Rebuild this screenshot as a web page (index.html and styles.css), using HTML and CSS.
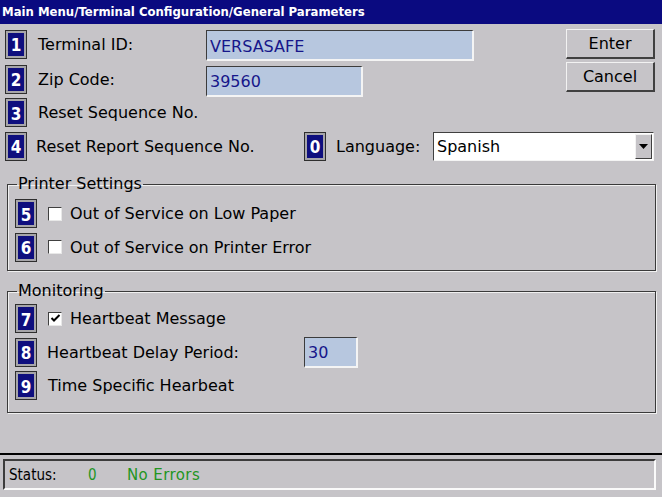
FILE: index.html
```html
<!DOCTYPE html>
<html>
<head>
<meta charset="utf-8">
<link rel="stylesheet" href="styles.css">
</head>
<body>
<div class="window">
  <div class="titlebar">Main Menu/Terminal Configuration/General Parameters</div>
  <div class="content">
    <div class="top">
      <div class="fields">
        <div class="row r1">
          <span class="badge">1</span>
          <span class="label lw1">Terminal ID:</span>
          <span class="input in-id">VERSASAFE</span>
        </div>
        <div class="row r2">
          <span class="badge">2</span>
          <span class="label lw1">Zip Code:</span>
          <span class="input in-zip">39560</span>
        </div>
      </div>
      <div class="buttons">
        <span class="btn">Enter</span>
        <span class="btn">Cancel</span>
      </div>
    </div>
    <div class="row r3">
      <span class="badge">3</span>
      <span class="label">Reset Sequence No.</span>
    </div>
    <div class="row r4">
      <span class="badge">4</span>
      <span class="label lw4">Reset Report Sequence No.</span>
      <span class="badge">0</span>
      <span class="label lw-lang">Language:</span>
      <span class="select">Spanish<span class="arrow"><svg width="9" height="5" viewBox="0 0 9 5"><path d="M0 0H9L4.5 5Z" fill="#000"/></svg></span></span>
    </div>
    <fieldset class="group printer">
      <legend>Printer Settings</legend>
      <div class="row g1">
        <span class="badge">5</span>
        <span class="check"></span>
        <span class="label">Out of Service on Low Paper</span>
      </div>
      <div class="row g2">
        <span class="badge">6</span>
        <span class="check"></span>
        <span class="label">Out of Service on Printer Error</span>
      </div>
    </fieldset>
    <fieldset class="group monitoring">
      <legend>Monitoring</legend>
      <div class="row g1">
        <span class="badge">7</span>
        <span class="check checked"><svg width="11" height="11" viewBox="0 0 11 11"><path d="M1.5 5L4 7.5L9.5 2" fill="none" stroke="#000" stroke-width="2"/></svg></span>
        <span class="label">Heartbeat Message</span>
      </div>
      <div class="row g2">
        <span class="badge">8</span>
        <span class="label lw8">Heartbeat Delay Period:</span>
        <span class="input in-delay">30</span>
      </div>
      <div class="row g3">
        <span class="badge">9</span>
        <span class="label">Time Specific Hearbeat</span>
      </div>
    </fieldset>
  </div>
  <div class="statusbar">
    <div class="status-panel">
      <span class="st-label">Status:</span>
      <span class="st-code">0</span>
      <span class="st-msg">No Errors</span>
    </div>
  </div>
</div>
</body>
</html>
```

FILE: styles.css
```css
html, body {
  margin: 0;
  padding: 0;
}
body {
  width: 662px;
  height: 497px;
  overflow: hidden;
  background: #c6c4c8;
  font-family: "DejaVu Sans", "Liberation Sans", sans-serif;
  font-size: 16px;
  color: #000;
}
.window {
  width: 662px;
  height: 497px;
  display: flex;
  flex-direction: column;
}
.titlebar {
  height: 24px;
  line-height: 24px;
  background: #0a0a80;
  color: #fff;
  font-weight: bold;
  font-stretch: condensed;
  font-size: 13px;
  padding-left: 2px;
  white-space: nowrap;
}
.content {
  height: 431px;
  flex: none;
  box-sizing: border-box;
  padding: 3px 7px 0 5px;
  border-bottom: 2px solid #000;
}
.top {
  display: flex;
  justify-content: space-between;
}
.fields {
  display: flex;
  flex-direction: column;
}
.row {
  display: flex;
  align-items: center;
}
.r1 { height: 34px; }
.r2 { height: 36px; }
.r3 { height: 31px; }
.r4 { height: 34px; margin-top: 1px; }
.badge {
  width: 22px;
  height: 29px;
  box-sizing: border-box;
  flex: none;
  border: 1px solid #2e2e2e;
  box-shadow: inset 0 0 0 2px #a6a5a9;
  background: #0e0e7e;
  color: #fff;
  font-size: 17px;
  font-weight: bold;
  font-stretch: condensed;
  display: flex;
  align-items: center;
  justify-content: center;
  padding-top: 2px;
}
.label {
  margin-left: 11px;
  white-space: nowrap;
}
.lw1 { width: 168px; }
.lw4 { width: 268px; margin-left: 9px; }
.lw-lang { width: 97px; margin-left: 10px; }
.lw8 { width: 257px; margin-left: 10px; }
.input {
  display: flex;
  align-items: center;
  box-sizing: border-box;
  height: 31px;
  background: #b7c7df;
  color: #16168a;
  border-top: 1px solid #3c3c3c;
  border-left: 1px solid #3c3c3c;
  border-bottom: 2px solid #f4f4f4;
  border-right: 2px solid #f4f4f4;
  padding-left: 3px;
  padding-top: 2px;
}
.in-id { width: 268px; margin-top: 3px; }
.in-zip { width: 157px; margin-top: 4px; }
.in-delay { width: 54px; }
.buttons {
  display: flex;
  flex-direction: column;
  gap: 3px;
  padding-top: 2px;
}
.btn {
  width: 89px;
  height: 30px;
  box-sizing: border-box;
  display: flex;
  align-items: center;
  justify-content: center;
  background: #c6c4c8;
  border-top: 1px solid #f2f2f2;
  border-left: 1px solid #f2f2f2;
  border-right: 2px solid #404040;
  border-bottom: 2px solid #404040;
}
.select {
  display: flex;
  align-items: center;
  justify-content: space-between;
  box-sizing: border-box;
  width: 221px;
  height: 29px;
  background: #fff;
  border-top: 1px solid #404040;
  border-left: 1px solid #404040;
  border-bottom: 1px solid #f4f4f4;
  border-right: 1px solid #f4f4f4;
  padding-left: 3px;
  padding-right: 1px;
}
.arrow {
  width: 17px;
  height: 25px;
  box-sizing: border-box;
  background: #c6c4c8;
  border-top: 1px solid #f2f2f2;
  border-left: 1px solid #f2f2f2;
  border-right: 1px solid #404040;
  border-bottom: 1px solid #404040;
  display: flex;
  align-items: center;
  justify-content: center;
}
.group {
  margin: 0 -1px 0 2px;
  padding: 0 0 0 7px;
  border: 1px solid #3a3a3a;
  box-shadow: 1px 1px 0 #f0f0f0, inset 1px 1px 0 #f0f0f0;
  min-width: 0;
}
.group legend {
  padding: 0 1px;
  margin-left: 2px;
  line-height: 18px;
  white-space: nowrap;
}
.printer {
  margin-top: 12px;
  height: 96px;
  box-sizing: border-box;
  padding-top: 4px;
}
.monitoring {
  margin-top: 11px;
  height: 131px;
  box-sizing: border-box;
  padding-top: 2px;
}
.g1, .g3 { height: 33px; }
.g2 { height: 34px; }
.check {
  width: 14px;
  height: 14px;
  box-sizing: border-box;
  flex: none;
  margin-left: 11px;
  background: #fff;
  border-top: 1px solid #404040;
  border-left: 1px solid #404040;
  border-bottom: 1px solid #e8e8e8;
  border-right: 1px solid #e8e8e8;
  display: flex;
  align-items: center;
  justify-content: center;
}
.check + .label { margin-left: 8px; }
.statusbar {
  flex: 1;
  padding: 4px 6px 7px 3px;
  box-sizing: border-box;
}
.status-panel {
  height: 31px;
  box-sizing: border-box;
  border-top: 2px solid #3c3c3c;
  border-left: 2px solid #3c3c3c;
  border-bottom: 2px solid #fafafa;
  border-right: 2px solid #fafafa;
  display: flex;
  align-items: center;
  padding-left: 4px;
  font-size: 15px;
  font-stretch: condensed;
}
.st-label { width: 79px; }
.st-code { width: 39px; color: #23951f; }
.st-msg { color: #23951f; font-stretch: normal; letter-spacing: 0.4px; }
```
